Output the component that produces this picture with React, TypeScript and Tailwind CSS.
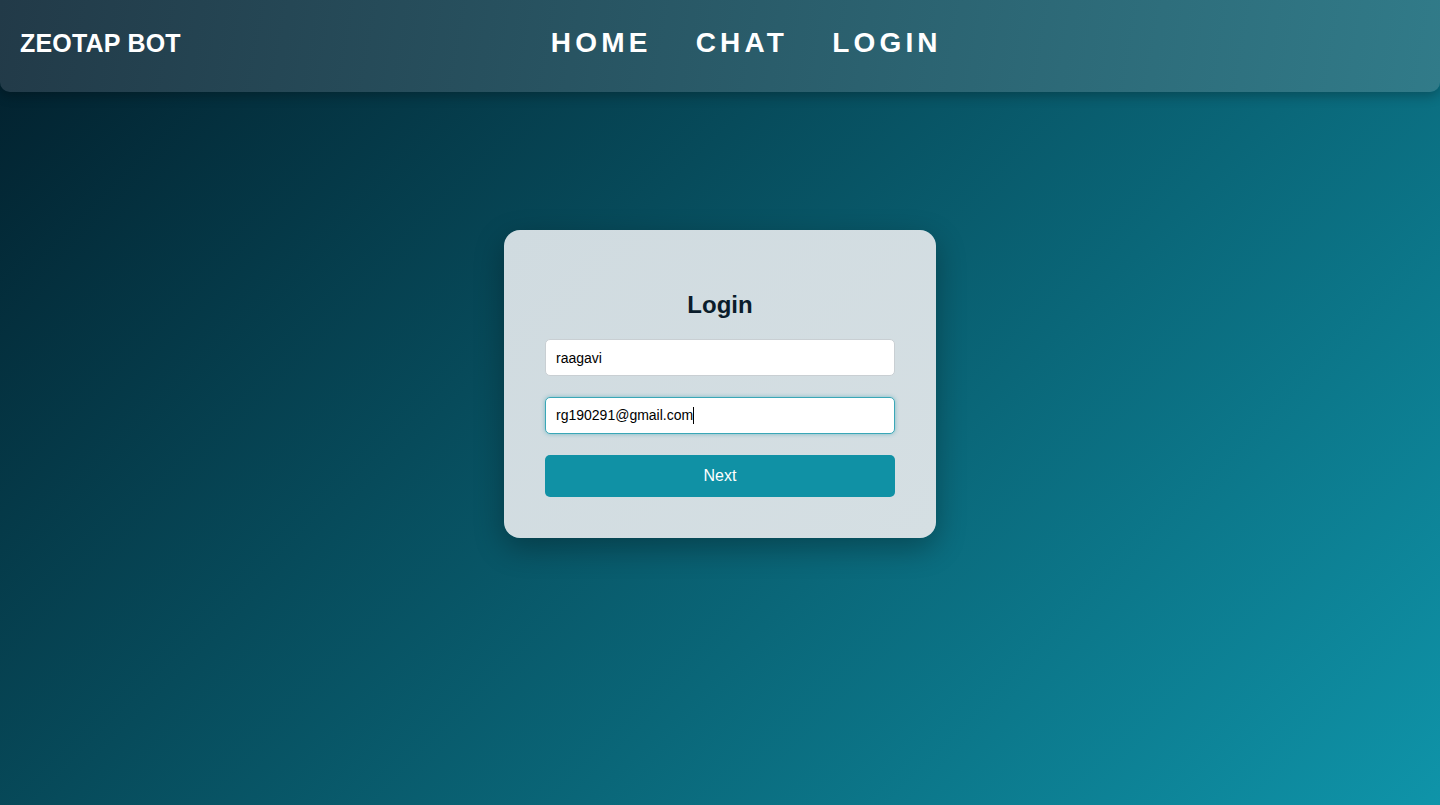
import React from "react";

export default function App() {
  return (
    <div
      className="min-h-[805px] w-full bg-[linear-gradient(135deg,#021e2b,#0f94a9)] flex flex-col"
      style={{ fontFamily: '"Liberation Sans", Arial, sans-serif' }}
    >
      <header className="h-[92px] w-full rounded-b-[10px] bg-[linear-gradient(100deg,#223a48,#317b89)] shadow-[0_4px_12px_rgba(0,0,0,0.25)] flex items-center pl-[20px] pb-[6px]">
        <div className="text-white font-bold text-[25px] leading-none tracking-[0.2px]">ZEOTAP BOT</div>
        <nav className="ml-[370px] flex items-center gap-[44px]">
          <a className="text-white font-bold text-[28px] leading-none tracking-[4.2px]">HOME</a>
          <a className="text-white font-bold text-[28px] leading-none tracking-[4.2px]">CHAT</a>
          <a className="text-white font-bold text-[28px] leading-none tracking-[4.2px]">LOGIN</a>
        </nav>
      </header>

      <main className="flex justify-center pt-[138px]">
        <div className="w-[432px] rounded-[16px] bg-[linear-gradient(135deg,#d0dbe0,#d5dfe3)] shadow-[0_10px_30px_rgba(0,0,0,0.3)] px-[41px] pt-[40px] pb-[41px] flex flex-col">
          <h2 className="text-center font-bold text-[24px] leading-[29px] text-[#0b1d2b] mt-[20px] mb-[20px]">Login</h2>
          <input
            className="h-[37px] w-full rounded-[5px] bg-white border border-[#c9cfd3] px-[10px] text-[14px] text-black outline-none"
            defaultValue="raagavi"
            readOnly
          />
          <div className="h-[21px]" />
          <div className="h-[37px] w-full rounded-[5px] bg-white border border-[#3aa7b7] shadow-[0_0_4px_rgba(16,145,165,0.45)] px-[10px] text-[14px] text-black flex items-center">
            <span>rg190291@gmail.com</span>
            <span className="inline-block w-px h-[17px] bg-black" />
          </div>
          <div className="h-[21px]" />
          <button className="h-[42px] w-full rounded-[5px] bg-[#1091a5] text-white text-[16px]">Next</button>
        </div>
      </main>
    </div>
  );
}
